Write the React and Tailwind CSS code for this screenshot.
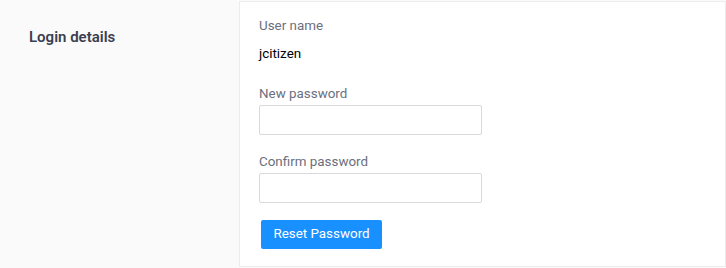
const Field = ({ label, children, className = "" }) => (
  <div className={className}>
    <p className="text-[13.4px] leading-[22px] text-[#6b6f7d]">{label}</p>
    {children}
  </div>
);

const App = () => {
  return (
    <div
      className="flex h-[268px] w-[726px] bg-[#fafafa] pt-px"
      style={{ fontFamily: "Roboto, 'Liberation Sans', sans-serif" }}
    >
      {/* left label column */}
      <div className="w-[239px] shrink-0 pl-[29px] pt-[25px]">
        <h3 className="text-[15px] leading-[22px] font-semibold text-[#3a3f4f]">Login details</h3>
      </div>

      {/* form panel */}
      <div className="h-[266px] flex-1 border border-[#ececec] bg-white pl-[19px] pt-[13px]">
        <Field label="User name">
          <p className="mt-[6px] text-[13.4px] leading-[22px] text-black">jcitizen</p>
        </Field>

        <Field label="New password" className="mt-[18px]">
          <input
            type="password"
            className="block h-[30px] w-[223px] rounded-[2px] border border-[#d9d9d9] bg-white px-2 text-sm outline-none"
          />
        </Field>

        <Field label="Confirm password" className="mt-[16px]">
          <input
            type="password"
            className="block h-[30px] w-[223px] rounded-[2px] border border-[#d9d9d9] bg-white px-2 text-sm outline-none"
          />
        </Field>

        <button className="mt-[17px] ml-[2px] h-[29px] w-[121px] rounded-[2px] bg-[#1890ff] text-[13.4px] text-white">
          Reset Password
        </button>
      </div>
    </div>
  );
};

export default App;
